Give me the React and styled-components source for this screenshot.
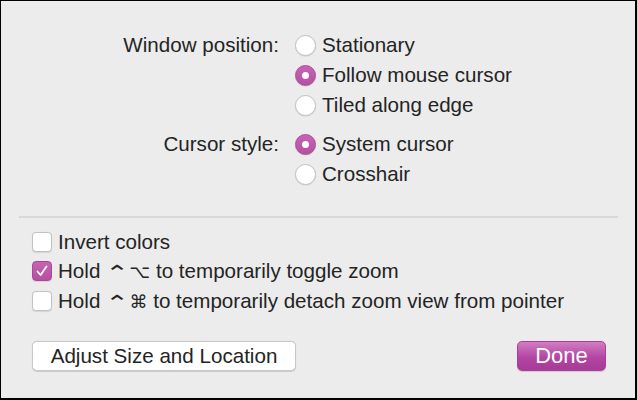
import styled, { createGlobalStyle } from 'styled-components'

const GlobalStyle = createGlobalStyle`
  html, body {
    margin: 0;
    padding: 0;
    background: #000;
  }
  body {
    font-family: "Liberation Sans", Arial, sans-serif;
    color: #242424;
  }
`

const Frame = styled.div`
  width: 637px;
  height: 400px;
  box-sizing: border-box;
  border-style: solid;
  border-color: #000;
  border-width: 1px 2px 2px 1px;
  background: #ececec;
  display: flex;
  flex-direction: column;
  font-size: 20.6px;
`

const Options = styled.div`
  display: flex;
  flex-direction: column;
  gap: 9px;
  padding-top: 29px;
`

const Group = styled.div`
  display: grid;
  grid-template-columns: 278px auto;
  column-gap: 16px;
  align-items: start;
`

const Label = styled.div`
  justify-self: end;
  height: 30px;
  line-height: 30px;
`

const Choices = styled.div`
  display: flex;
  flex-direction: column;
`

const Choice = styled.label`
  display: flex;
  align-items: center;
  gap: 6px;
  height: ${(p) => p.h || 30}px;
`

const Radio = styled.span`
  width: 21px;
  height: 21px;
  box-sizing: border-box;
  border-radius: 50%;
  display: flex;
  align-items: center;
  justify-content: center;
  background: ${(p) => (p.on ? 'linear-gradient(#c764b5, #b4509f)' : '#fff')};
  border: 1px solid ${(p) => (p.on ? '#a9489a' : '#c2c2c2')};
  box-shadow: 0 0.5px 1px rgba(0, 0, 0, 0.12);

  &::after {
    content: '';
    display: ${(p) => (p.on ? 'block' : 'none')};
    width: 7px;
    height: 7px;
    border-radius: 50%;
    background: #fff;
  }
`

const Separator = styled.div`
  height: 2px;
  background: #d8d8d8;
  margin: 27px 17px 9px 18px;
`

const Checks = styled.div`
  display: flex;
  flex-direction: column;
  padding-left: 31px;
`

const Box = styled.span`
  width: 20px;
  height: 20px;
  box-sizing: border-box;
  border-radius: 4px;
  display: flex;
  align-items: center;
  justify-content: center;
  background: ${(p) => (p.on ? 'linear-gradient(#c563b3, #b4509f)' : '#fff')};
  border: 1px solid ${(p) => (p.on ? '#a9489a' : '#c2c2c2')};
  box-shadow: 0 0.5px 1px rgba(0, 0, 0, 0.1);
`

const Keys = styled.span`
  font-family: "DejaVu Sans", sans-serif;
  font-size: 18px;
  margin-left: 5px;
`

const Caret = styled.span`
  display: inline-block;
  transform: scale(1.6, 1.15);
  transform-origin: 0 30%;
  margin-right: 9px;
`

const Footer = styled.div`
  display: flex;
  justify-content: space-between;
  align-items: center;
  padding: 25px 29px 0 31px;
`

const Button = styled.button`
  font-family: inherit;
  font-size: ${(p) => (p.primary ? 22 : 20.6)}px;
  height: 30px;
  box-sizing: border-box;
  border-radius: 5px;
  padding: 0;
  cursor: default;
  width: ${(p) => p.w}px;
  color: ${(p) => (p.primary ? '#fff' : '#242424')};
  border: 1px solid ${(p) => (p.primary ? '#a83f98' : '#c8c8c8')};
  background: ${(p) =>
    p.primary ? 'linear-gradient(#d27cc4, #b346a2 55%, #a83a98)' : '#fff'};
  box-shadow: 0 0.5px 1px rgba(0, 0, 0, 0.15);
`

const Check = () => (
  <svg width="14" height="14" viewBox="0 0 14 14">
    <path d="M2.5 7.5 L5.6 11 L11.5 2.5" fill="none" stroke="#fff" strokeWidth="1.8" strokeLinecap="round" strokeLinejoin="round" />
  </svg>
)

const groups = [
  {
    label: 'Window position:',
    items: [
      { text: 'Stationary' },
      { text: 'Follow mouse cursor', on: true },
      { text: 'Tiled along edge' },
    ],
  },
  {
    label: 'Cursor style:',
    items: [{ text: 'System cursor', on: true }, { text: 'Crosshair' }],
  },
]

const checks = [
  { text: 'Invert colors' },
  { key: '⌥', text: ' to temporarily toggle zoom', on: true },
  { key: '⌘', text: ' to temporarily detach zoom view from pointer' },
]

export default function App() {
  return (
    <>
      <GlobalStyle />
      <Frame>
        <Options>
          {groups.map((g) => (
            <Group key={g.label}>
              <Label>{g.label}</Label>
              <Choices>
                {g.items.map((it) => (
                  <Choice key={it.text}>
                    <Radio on={it.on} />
                    {it.text}
                  </Choice>
                ))}
              </Choices>
            </Group>
          ))}
        </Options>
        <Separator />
        <Checks>
          {checks.map((c, i) => (
            <Choice key={i} h={29.5}>
              <Box on={c.on}>{c.on && <Check />}</Box>
              <span>
                {c.key ? 'Hold' : ''}
                {c.key && (
                  <Keys>
                    <Caret>⌃</Caret>
                    {c.key}
                  </Keys>
                )}
                {c.text}
              </span>
            </Choice>
          ))}
        </Checks>
        <Footer>
          <Button w={264}>Adjust Size and Location</Button>
          <Button primary w={89}>Done</Button>
        </Footer>
      </Frame>
    </>
  )
}
